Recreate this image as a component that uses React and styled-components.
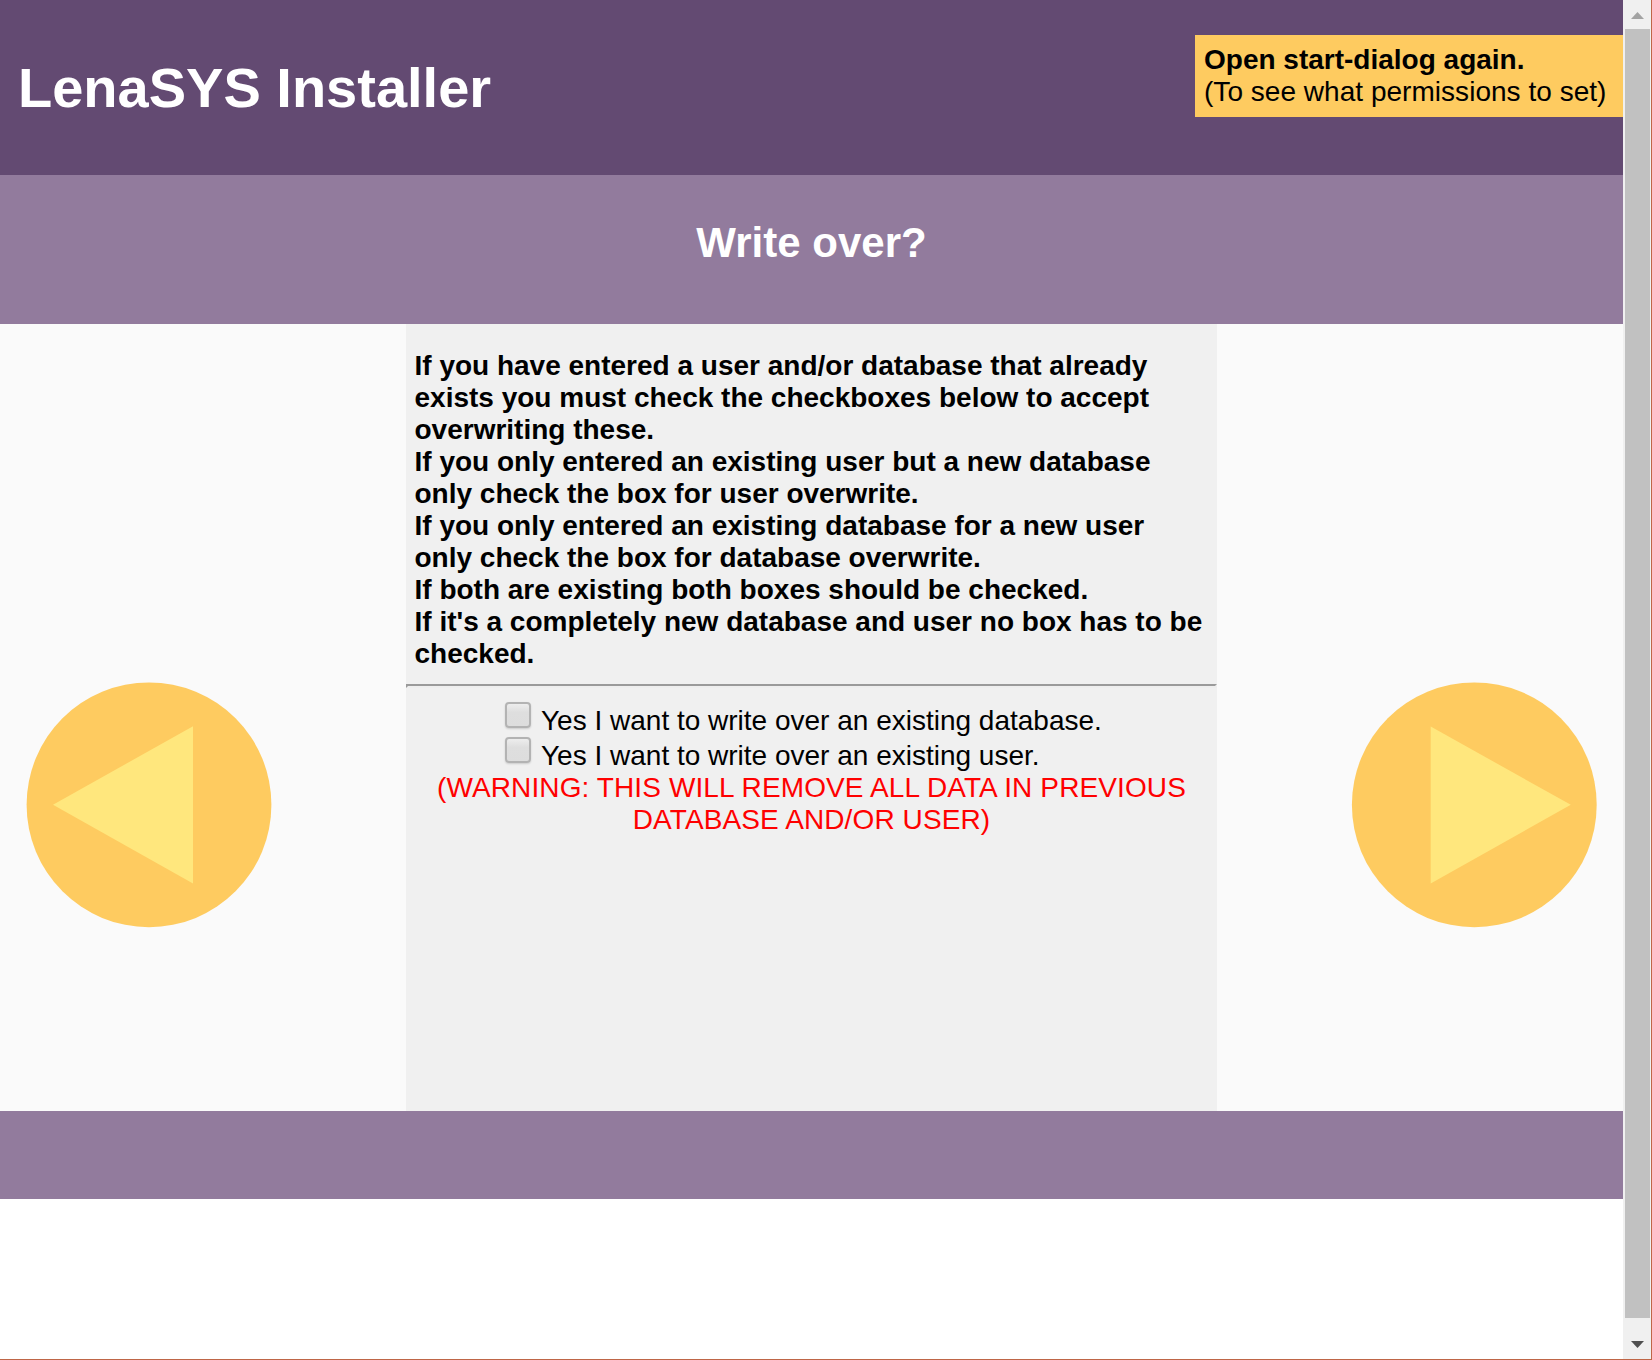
import React from "react";
import styled, { createGlobalStyle } from "styled-components";

const GlobalStyle = createGlobalStyle`
  *, *::before, *::after { box-sizing: border-box; }
  body {
    margin: 0;
    background: #ffffff;
    font-family: "Liberation Sans", Arial, Helvetica, sans-serif;
    font-size: 28px;
    line-height: 32px;
    color: #000000;
    overflow: hidden;
  }
`;

const Window = styled.div`
  display: flex;
  width: 1652px;
  height: 1360px;
  border-right: 1px solid #bf6647;
  border-bottom: 1px solid #bf6647;
  overflow: hidden;
`;

const Page = styled.main`
  flex: 0 0 1623px;
  display: flex;
  flex-direction: column;
`;

const Header = styled.header`
  display: flex;
  justify-content: space-between;
  align-items: flex-start;
  height: 175px;
  padding: 35px 0 0 18px;
  background: #634a72;
`;

const Title = styled.h1`
  margin: 21px 0 0;
  font-size: 56px;
  line-height: 64px;
  color: #ffffff;
  white-space: nowrap;
`;

const DialogButton = styled.button`
  width: 428px;
  height: 82px;
  padding: 9px 0 9px 9px;
  border: 0;
  background: #fecb60;
  font: inherit;
  color: #000000;
  text-align: left;
  white-space: nowrap;
`;

const Hint = styled.span`
  letter-spacing: 0.03px;
`;

const Banner = styled.section`
  height: 149px;
  padding-top: 44px;
  background: #927b9d;
  text-align: center;
`;

const Heading = styled.h2`
  margin: 0;
  font-size: 42px;
  line-height: 48px;
  color: #ffffff;
`;

const Body = styled.section`
  display: flex;
  height: 787px;
  background: #fafafa;
`;

const Side = styled.div`
  flex: 1;
  display: flex;
  align-items: flex-start;
  justify-content: ${(p) => (p.$end ? "flex-end" : "flex-start")};
  padding: 358px 26px 0;
`;

const ArrowButton = styled.button`
  width: 246px;
  height: 246px;
  padding: 0;
  border: 0;
  background: none;

  svg { display: block; }
`;

const Panel = styled.div`
  flex: 0 0 811px;
  background: #f0f0f0;
`;

const Info = styled.p`
  margin: 0;
  padding: 26px 0 0 8.5px;
  font-weight: bold;
  white-space: nowrap;
`;

const Rule = styled.hr`
  height: 4px;
  margin: 14px 0;
  border: 2px solid;
  border-color: #9a9a9a #eeeeee #eeeeee #9a9a9a;
`;

const Options = styled.div`
  display: flex;
  flex-direction: column;
  padding-left: 99px;
`;

const Option = styled.label`
  display: flex;
  height: 35px;
  padding-top: 3px;
  white-space: nowrap;
`;

const Checkbox = styled.input`
  appearance: none;
  width: 26px;
  height: 26px;
  margin: -3px 10px 0 0;
  border: 2px solid #b3b3b3;
  border-radius: 4px;
  background: linear-gradient(#ededed, #dedede 38%, #dddddd);
  box-shadow: 0 1px 2px rgba(0, 0, 0, 0.15);
`;

const Warning = styled.p`
  margin: 0;
  color: #ff0000;
  letter-spacing: 0.11px;
  text-align: center;
`;

const Footer = styled.footer`
  height: 88px;
  background: #927b9d;
`;

const Scrollbar = styled.div`
  flex: 0 0 28px;
  display: flex;
  flex-direction: column;
  background: #f0f0f0;
`;

const ScrollArrow = styled.div`
  height: 29px;
  padding: ${(p) => (p.$down ? "23px 0 0 8px" : "12px 0 0 8px")};

  svg { display: block; }
`;

const Thumb = styled.div`
  height: 1289px;
  margin: 0 1px 0 2px;
  background: #c1c1c1;
`;

const infoLines = [
  "If you have entered a user and/or database that already",
  "exists you must check the checkboxes below to accept",
  "overwriting these.",
  "If you only entered an existing user but a new database",
  "only check the box for user overwrite.",
  "If you only entered an existing database for a new user",
  "only check the box for database overwrite.",
  "If both are existing both boxes should be checked.",
  "If it's a completely new database and user no box has to be",
  "checked.",
];

const warningLines = [
  "(WARNING: THIS WILL REMOVE ALL DATA IN PREVIOUS",
  "DATABASE AND/OR USER)",
];

const Lines = ({ items }) =>
  items.map((line, i) => (
    <React.Fragment key={line}>
      {i > 0 && <br />}
      {line}
    </React.Fragment>
  ));

const Arrow = ({ points, cx }) => (
  <svg width="246" height="246" viewBox="0 0 246 246">
    <circle cx={cx} cy="122.8" r="122.4" fill="#fecb60" />
    <polygon points={points} fill="#ffe77d" />
  </svg>
);

export default function App() {
  return (
    <>
      <GlobalStyle />
      <Window>
        <Page>
          <Header>
            <Title>LenaSYS Installer</Title>
            <DialogButton>
              <b>Open start-dialog again.</b>
              <br />
              <Hint>(To see what permissions to set)</Hint>
            </DialogButton>
          </Header>
          <Banner>
            <Heading>Write over?</Heading>
          </Banner>
          <Body>
            <Side>
              <ArrowButton aria-label="Back">
                <Arrow cx="123" points="27,122.8 167,44.2 167,201.5" />
              </ArrowButton>
            </Side>
            <Panel>
              <Info><Lines items={infoLines} /></Info>
              <Rule />
              <Options>
                <Option><Checkbox type="checkbox" />Yes I want to write over an existing database.</Option>
                <Option><Checkbox type="checkbox" />Yes I want to write over an existing user.</Option>
              </Options>
              <Warning><Lines items={warningLines} /></Warning>
            </Panel>
            <Side $end>
              <ArrowButton aria-label="Next">
                <Arrow cx="123.3" points="79.7,44.5 219.8,122.8 79.7,201.5" />
              </ArrowButton>
            </Side>
          </Body>
          <Footer />
        </Page>
        <Scrollbar>
          <ScrollArrow>
            <svg width="13" height="7"><path d="M6.5 0 L13 7 H0 Z" fill="#a3a3a3" /></svg>
          </ScrollArrow>
          <Thumb />
          <ScrollArrow $down>
            <svg width="13" height="7"><path d="M0 0 H13 L6.5 7 Z" fill="#505050" /></svg>
          </ScrollArrow>
        </Scrollbar>
      </Window>
    </>
  );
}
